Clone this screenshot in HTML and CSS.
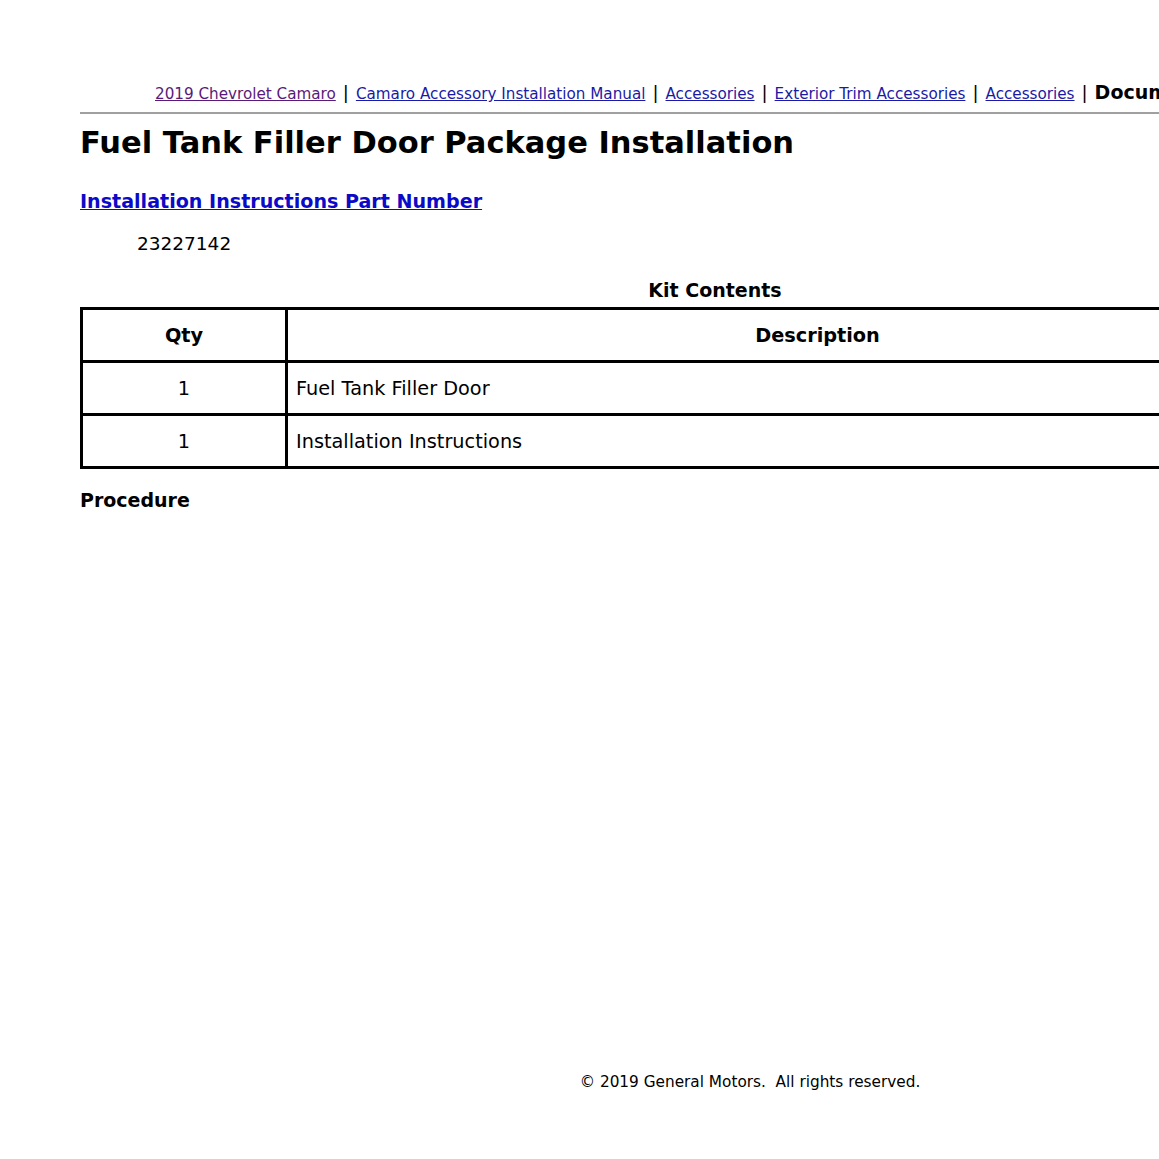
FILE: index.html
```html
<!DOCTYPE html>
<html>
<head>
<meta charset="utf-8">
<link rel="stylesheet" href="styles.css">
</head>
<body>
<div class="page">
  <div class="crumbs">
    <a class="visited" href="#">2019 Chevrolet Camaro</a><span class="sep">|</span><a href="#">Camaro Accessory Installation Manual</a><span class="sep">|</span><a href="#">Accessories</a><span class="sep">|</span><a href="#">Exterior Trim Accessories</a><span class="sep">|</span><a href="#">Accessories</a><span class="sep">|</span><b class="docid">Document ID: 5188806</b>
  </div>
  <div class="rule"></div>
  <h1 class="title">Fuel Tank Filler Door Package Installation</h1>
  <a class="partlink" href="#">Installation Instructions Part Number</a>
  <p class="partno">23227142</p>
  <table class="kit">
    <caption class="kit-caption">Kit Contents</caption>
    <thead>
      <tr><th class="qty">Qty</th><th class="desc">Description</th></tr>
    </thead>
    <tbody>
      <tr><td class="qty">1</td><td class="desc">Fuel Tank Filler Door</td></tr>
      <tr><td class="qty">1</td><td class="desc">Installation Instructions</td></tr>
    </tbody>
  </table>
  <h3 class="procedure">Procedure</h3>
  <div class="spacer"></div>
  <p class="copyright">© 2019 General Motors.&nbsp; All rights reserved.</p>
</div>
</body>
</html>
```
FILE: styles.css
```css
html, body {
  margin: 0;
  padding: 0;
  background: #fff;
}
body {
  font-family: "DejaVu Sans", Verdana, sans-serif;
  color: #000;
  width: 1500px;
}
.page {
  padding: 80px 0 0 80px;
  width: 1420px;
}
.crumbs {
  padding-left: 75px;
  font-size: 15.2px;
  line-height: 24px;
  white-space: nowrap;
}
.crumbs a {
  color: #1a1aa6;
}
.crumbs a.visited {
  color: #5a1a7a;
}
.sep {
  font-size: 18px;
  margin: 0 7px;
}
.docid {
  font-size: 19px;
}
.rule {
  margin-top: 6px;
  height: 2px;
  background: #a0a0a0;
  width: 1420px;
}
.title {
  font-size: 30.5px;
  font-weight: bold;
  margin: 9px 0 0 0;
  line-height: 40px;
}
.partlink {
  display: inline-block;
  margin-top: 27px;
  font-size: 19.1px;
  font-weight: bold;
  color: #0a0ac8;
}
.partno {
  margin: 20px 0 0 57px;
  font-size: 18.5px;
}
.kit {
  border-collapse: collapse;
  width: 1270px;
  margin-top: 25px;
}
.kit-caption {
  font-size: 19px;
  font-weight: bold;
  padding-bottom: 6px;
}
.kit th, .kit td {
  border: 3px solid #000;
  height: 50px;
  font-size: 19.3px;
  padding: 0 8px;
}
.kit th {
  text-align: center;
}
.kit .qty {
  width: 186px;
  text-align: center;
}
.kit td.desc {
  text-align: left;
}
.procedure {
  font-size: 19px;
  margin: 20px 0 0 0;
}
.spacer {
  height: 562px;
}
.copyright {
  margin: 0;
  font-size: 15.3px;
  text-align: center;
  width: 1340px;
}
```
